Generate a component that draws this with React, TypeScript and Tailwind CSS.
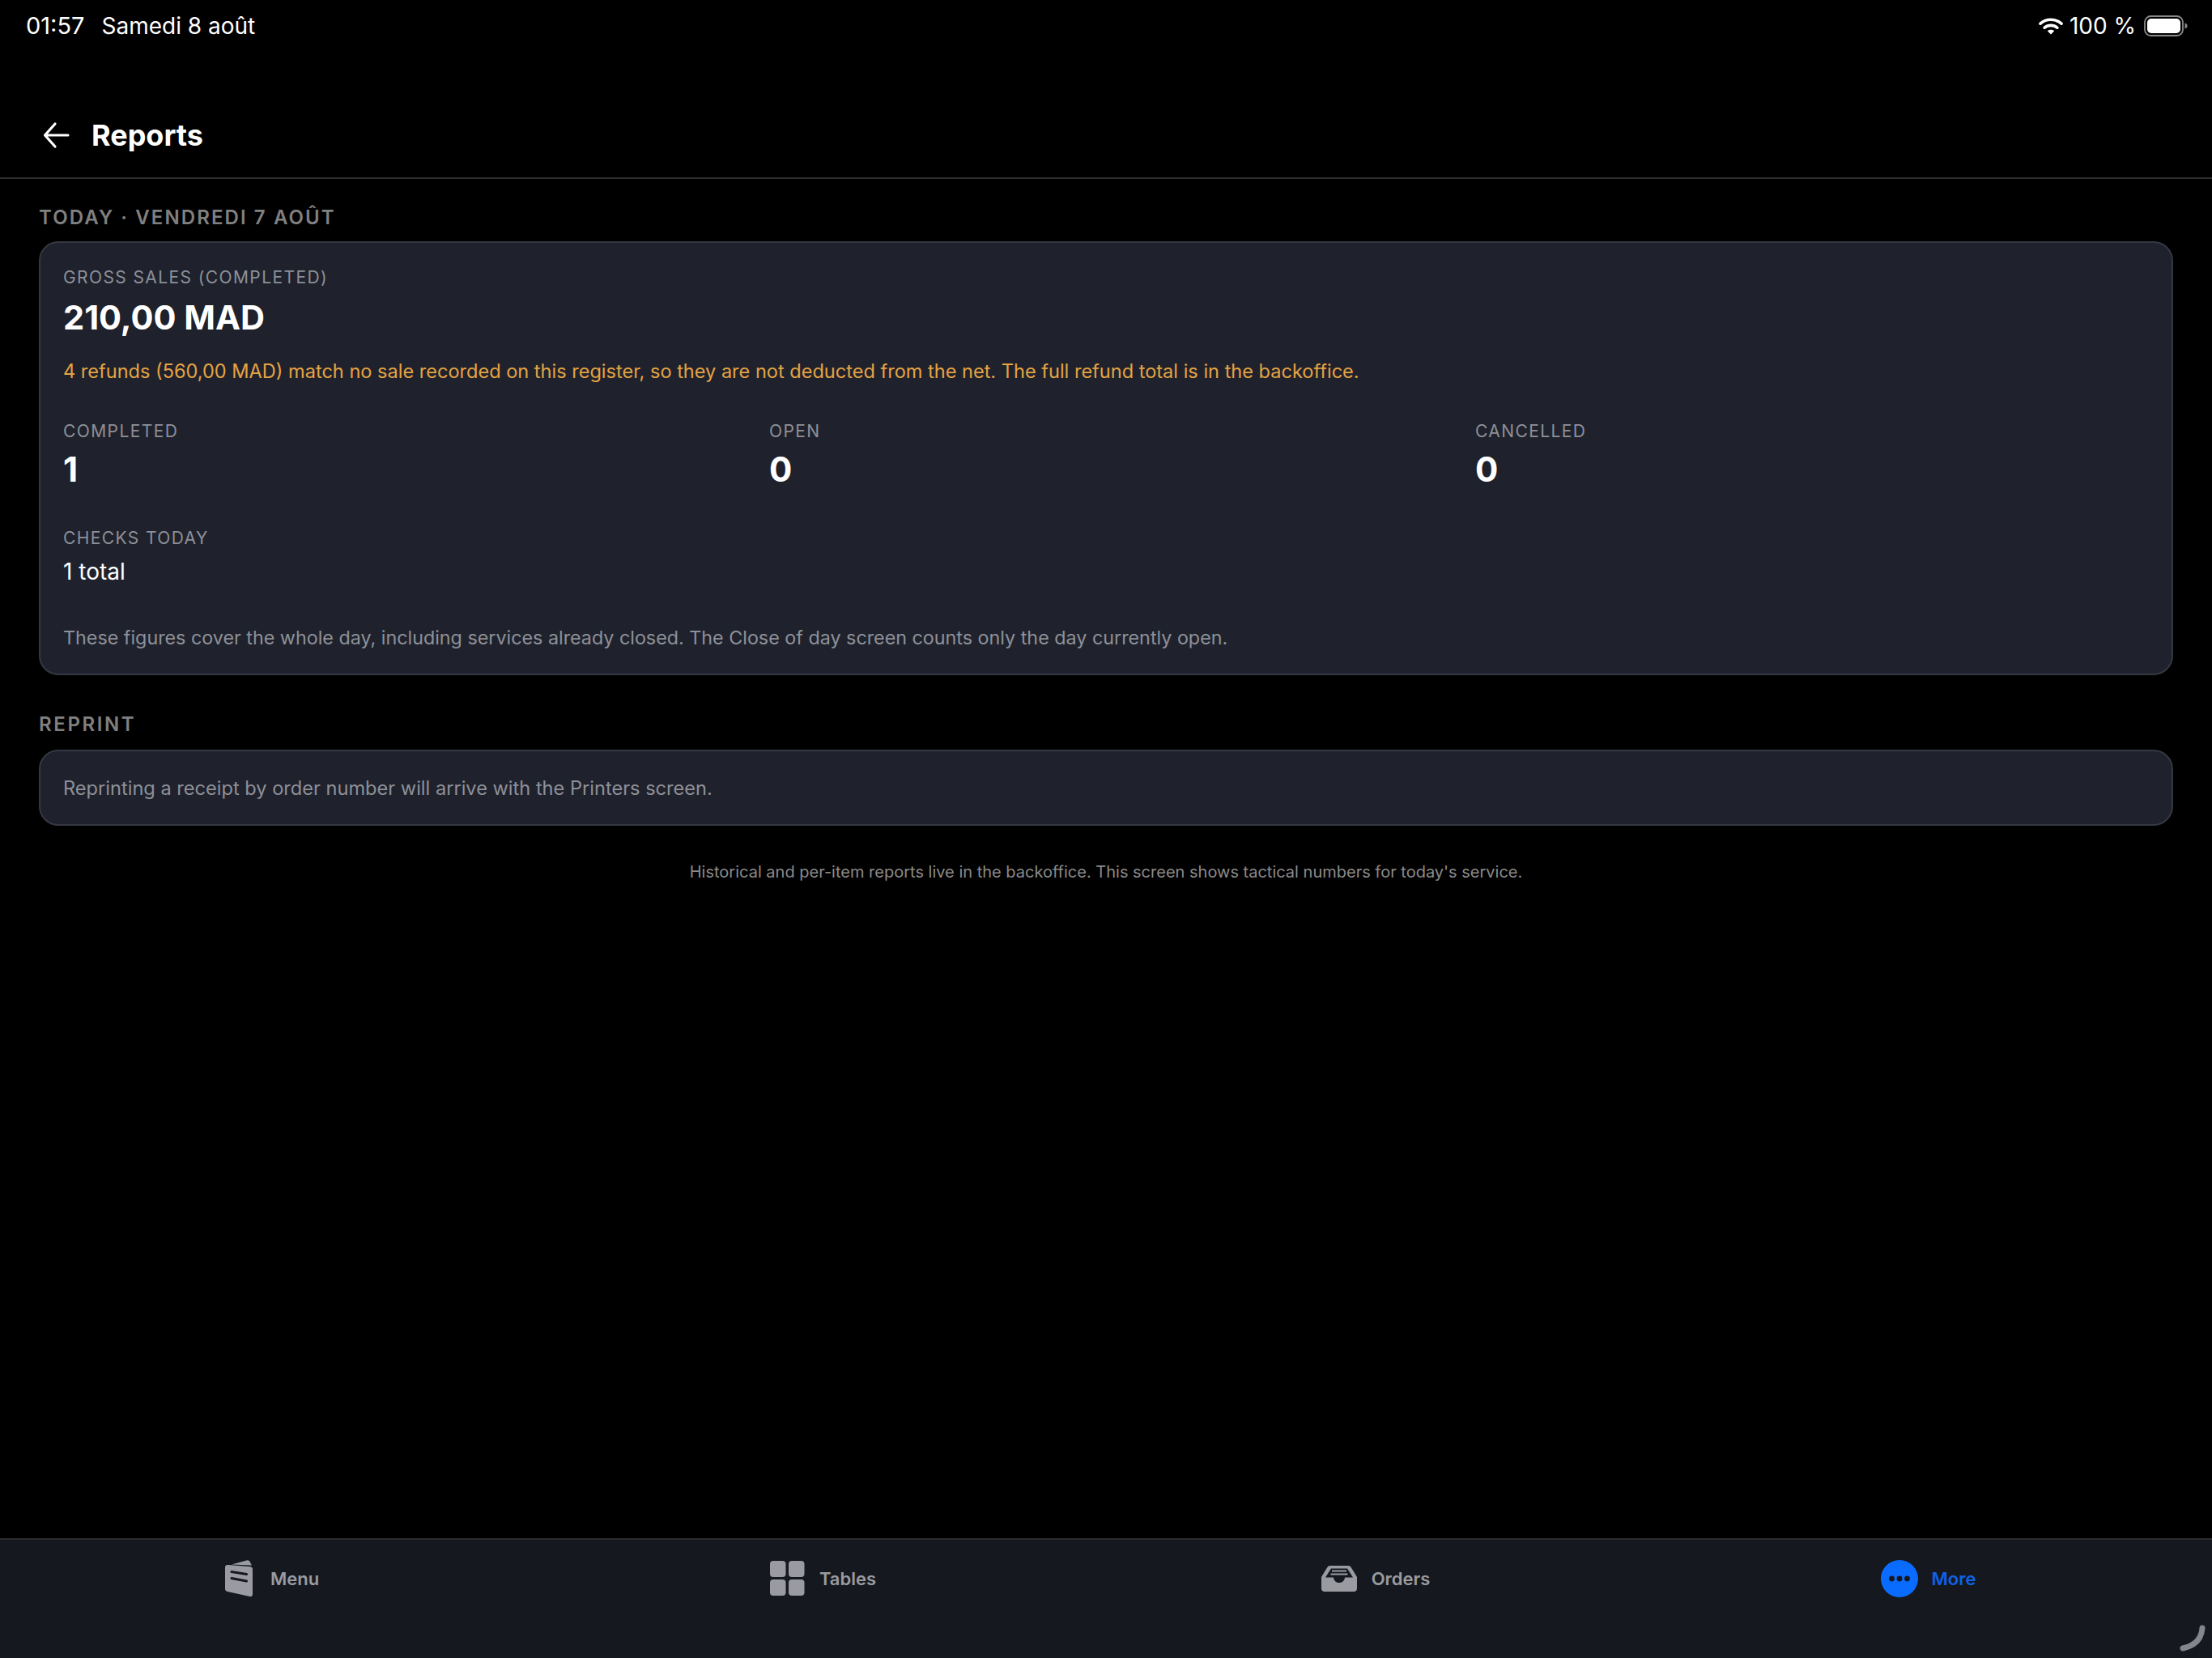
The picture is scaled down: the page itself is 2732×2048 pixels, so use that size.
import React from "react";

const font = { fontFamily: 'Inter, "Noto Sans", sans-serif' };

function Wifi() {
  return (
    <svg width="30" height="22" viewBox="0 0 30 22" fill="none" aria-hidden>
      <path d="M2 8.2C9.4 1.6 20.6 1.6 28 8.2" stroke="#fff" strokeWidth="3.6" strokeLinecap="round" />
      <path d="M7.2 13.2C11.6 9.4 18.4 9.4 22.8 13.2" stroke="#fff" strokeWidth="3.6" strokeLinecap="round" />
      <path d="M15 21.5L10.8 17.2C13.2 15.4 16.8 15.4 19.2 17.2Z" fill="#fff" />
    </svg>
  );
}

function Battery() {
  return (
    <svg width="54" height="26" viewBox="0 0 54 26" fill="none" aria-hidden>
      <rect x="1" y="1" width="47" height="24" rx="7.5" stroke="#8a8a8a" strokeWidth="1.8" />
      <rect x="4" y="4" width="41" height="18" rx="5" fill="#fff" />
      <path d="M50.5 9.5C52.5 10 53.5 11.4 53.5 13C53.5 14.6 52.5 16 50.5 16.5Z" fill="#8a8a8a" />
    </svg>
  );
}

function MenuIcon() {
  return (
    <svg width="48" height="48" viewBox="0 0 48 48" aria-hidden>
      <path d="M16 6.5L34.5 1.5C37 1 38.5 2 39 4L41 7.5Z" fill="#9a9ba1" />
      <path d="M8 10C8 7.5 9.5 6.6 12 7L38 9C40.5 9.3 42 10.2 42 12V43C42 45.5 40.5 46.5 38.5 46L11 40C9 39.5 8 38.3 8 36.5Z" fill="#9a9ba1" />
      <path d="M16 15.5L34.5 18.5M16 23.5L34.5 27" stroke="#15181e" strokeWidth="3" strokeLinecap="round" />
    </svg>
  );
}

function TablesIcon() {
  return (
    <svg width="48" height="48" viewBox="0 0 48 48" fill="#9a9ba1" aria-hidden>
      <rect x="3" y="2" width="19.5" height="20" rx="4" />
      <rect x="26" y="2" width="19.5" height="20" rx="4" />
      <rect x="3" y="25" width="19.5" height="20" rx="4" />
      <rect x="26" y="25" width="19.5" height="20" rx="4" />
    </svg>
  );
}

function OrdersIcon() {
  return (
    <svg width="48" height="48" viewBox="0 0 48 48" aria-hidden>
      <path d="M13 8H35C37 8 38 8.8 39 10.5L46 22V36C46 38.5 44.5 40 42 40H6C3.5 40 2 38.5 2 36V22L9 10.5C10 8.8 11 8 13 8Z" fill="#9a9ba1" />
      <path d="M14 11.5H34L41 22.5H31C30.5 26.5 28 29 24 29C20 29 17.5 26.5 17 22.5H7Z" fill="#15181e" />
      <path d="M15 14.5H33M13.5 18.5H34.5" stroke="#9a9ba1" strokeWidth="1.8" />
    </svg>
  );
}

function MoreIcon() {
  return (
    <svg width="48" height="48" viewBox="0 0 48 48" aria-hidden>
      <circle cx="24" cy="24" r="23" fill="#0a6cff" />
      <circle cx="14.5" cy="24" r="3.4" fill="#15181e" />
      <circle cx="24" cy="24" r="3.4" fill="#15181e" />
      <circle cx="33.5" cy="24" r="3.4" fill="#15181e" />
    </svg>
  );
}

function Tab({ icon, label, active }: { icon: React.ReactNode; label: string; active?: boolean }) {
  return (
    <div className="flex items-center justify-center gap-4 pr-[19px]">
      {icon}
      <span className={`text-[22px] leading-[28px] font-semibold ${active ? "text-[#0f62e6]" : "text-[#9a9ba1]"}`}>
        {label}
      </span>
    </div>
  );
}

function Stat({ label, value }: { label: string; value: string }) {
  return (
    <div className="flex flex-col">
      <span className="text-[21px] leading-[28px] tracking-[1.4px] text-[#8e9099]">{label}</span>
      <span className="mt-[8px] text-[42px] leading-[50px] font-bold text-white">{value}</span>
    </div>
  );
}

export default function App() {
  return (
    <div className="relative flex h-screen flex-col overflow-hidden bg-black" style={font}>
      <div className="flex h-[64px] shrink-0 items-center justify-between pl-[32px] pr-[30px] text-white">
        <div className="flex items-center gap-[21px]">
          <span className="text-[29px]">01:57</span>
          <span className="text-[28px]">Samedi 8 août</span>
        </div>
        <div className="flex items-center gap-[8px]">
          <Wifi />
          <span className="mr-[2px] text-[28px]">100 %</span>
          <Battery />
        </div>
      </div>

      <div className="flex h-[157px] shrink-0 items-center gap-[25px] border-b-2 border-[#2c2c2e] pl-[52px] pt-[50px]">
        <svg width="36" height="36" viewBox="0 0 36 36" fill="none" stroke="#fff" strokeWidth="3.2" strokeLinecap="round" strokeLinejoin="round" aria-hidden>
          <path d="M32 18H4M16 4L3.5 18L16 32" />
        </svg>
        <span className="text-[36px] leading-[44px] font-bold text-white">Reports</span>
      </div>

      <main className="flex flex-1 flex-col px-[48px] pt-[32px]">
        <h2 className="text-[24px] leading-[32px] font-semibold tracking-[2.1px] text-[#808080]">TODAY · VENDREDI 7 AOÛT</h2>
        <section className="mt-[13px] flex flex-col rounded-[24px] border-2 border-[#353842] bg-[#1f222c] px-[28px] pt-[29px]">
          <span className="text-[21px] leading-[28px] tracking-[1.4px] text-[#8e9099]">GROSS SALES (COMPLETED)</span>
          <span className="mt-[8px] text-[41.5px] leading-[54px] font-bold text-white">210,00 MAD</span>
          <p className="mt-[24px] text-[23.55px] leading-[32px] text-[#e5a344]">
            4 refunds (560,00 MAD) match no sale recorded on this register, so they are not deducted from the net. The full refund total is in the backoffice.
          </p>
          <div className="mt-[44px] grid grid-cols-3 gap-[40px]">
            <Stat label="COMPLETED" value="1" />
            <Stat label="OPEN" value="0" />
            <Stat label="CANCELLED" value="0" />
          </div>
          <div className="mt-[46px] flex flex-col">
            <span className="text-[21px] leading-[28px] tracking-[1.4px] text-[#8e9099]">CHECKS TODAY</span>
            <span className="mt-[10px] text-[28px] leading-[34px] text-white">1 total</span>
          </div>
          <p className="mt-[49px] mb-[28px] text-[23.3px] leading-[32px] text-[#8e9099]">
            These figures cover the whole day, including services already closed. The Close of day screen counts only the day currently open.
          </p>
        </section>

        <h2 className="mt-[45px] text-[24px] leading-[32px] font-semibold tracking-[2.6px] text-[#808080]">REPRINT</h2>
        <section className="mt-[15px] rounded-[24px] border-2 border-[#353842] bg-[#1f222c] px-[28px] pb-[28px] pt-[30px]">
          <p className="text-[23.6px] leading-[32px] text-[#8e9099]">Reprinting a receipt by order number will arrive with the Printers screen.</p>
        </section>

        <p className="mt-[43px] text-center text-[20px] leading-[28px] text-[#8a8a8a]">
          Historical and per-item reports live in the backoffice. This screen shows tactical numbers for today's service.
        </p>
      </main>

      <nav className="grid h-[148px] shrink-0 grid-cols-4 border-t-2 border-[#2c2c2e] bg-[#15181e] pb-[50px]">
        <Tab icon={<MenuIcon />} label="Menu" />
        <Tab icon={<TablesIcon />} label="Tables" />
        <Tab icon={<OrdersIcon />} label="Orders" />
        <Tab icon={<MoreIcon />} label="More" active />
      </nav>

      <svg className="absolute bottom-0 right-0" width="60" height="60" viewBox="0 0 60 60" fill="none" aria-hidden>
        <path d="M48 23C47 37 38 45 24 48" stroke="#85868b" strokeWidth="7" strokeLinecap="round" />
      </svg>
    </div>
  );
}
